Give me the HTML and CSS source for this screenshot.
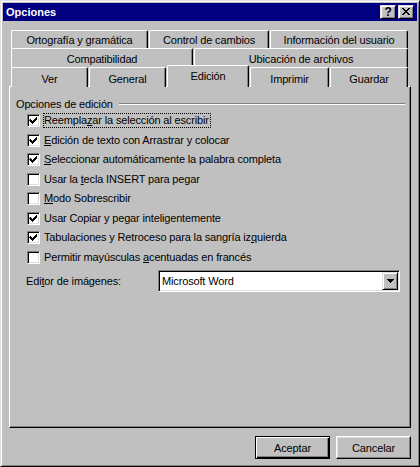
FILE: index.html
```html
<!DOCTYPE html>
<html lang="es">
<head>
    <meta charset="UTF-8">
    <title>Opciones</title>
    <link rel="stylesheet" href="styles.css">
</head>
<body>
<div class="window">
    <div class="titlebar">
        <span class="title">Opciones</span>
        <span class="caption-btn help">?</span>
        <span class="caption-btn close">
            <svg width="8" height="7" viewBox="0 0 8 7"><path d="M0 0h2v1h-2zM6 0h2v1h-2zM1 1h2v1h-2zM5 1h2v1h-2zM2 2h4v1h-4zM3 3h2v1h-2zM2 4h4v1h-4zM1 5h2v1h-2zM5 5h2v1h-2zM0 6h2v1h-2zM6 6h2v1h-2z" fill="#000"/></svg>
        </span>
    </div>

    <div class="content">
        <div class="tabs">
            <div class="tab-row row-1">
                <div class="tab">Ortografía y gramática</div>
                <div class="tab">Control de cambios</div>
                <div class="tab">Información del usuario</div>
            </div>
            <div class="tab-row row-2">
                <div class="tab">Compatibilidad</div>
                <div class="tab">Ubicación de archivos</div>
            </div>
            <div class="tab-row row-3">
                <div class="tab">Ver</div>
                <div class="tab">General</div>
                <div class="tab selected">Edición</div>
                <div class="tab">Imprimir</div>
                <div class="tab">Guardar</div>
            </div>
        </div>

        <div class="panel">
            <div class="group-title">
                <span>Opciones de edición</span>
                <span class="rule"></span>
            </div>

            <ul class="options">
                <li class="option">
                    <span class="check"><svg viewBox="0 0 11 11"><path d="M2 4h1v1h1v1h1v-1h1v-1h1v-1h1v-1h1v3h-1v1h-1v1h-1v1h-1v1h-1v-1h-1v-1h-1v-1h-1z"/></svg></span>
                    <span class="label focus">Reempla<u>z</u>ar la selección al escribir</span>
                </li>
                <li class="option">
                    <span class="check"><svg viewBox="0 0 11 11"><path d="M2 4h1v1h1v1h1v-1h1v-1h1v-1h1v-1h1v3h-1v1h-1v1h-1v1h-1v1h-1v-1h-1v-1h-1v-1h-1z"/></svg></span>
                    <span class="label"><u>E</u>dición de texto con Arrastrar y colocar</span>
                </li>
                <li class="option">
                    <span class="check"><svg viewBox="0 0 11 11"><path d="M2 4h1v1h1v1h1v-1h1v-1h1v-1h1v-1h1v3h-1v1h-1v1h-1v1h-1v1h-1v-1h-1v-1h-1v-1h-1z"/></svg></span>
                    <span class="label"><u>S</u>eleccionar automáticamente la palabra completa</span>
                </li>
                <li class="option">
                    <span class="check"></span>
                    <span class="label">Usar la <u>t</u>ecla INSERT para pegar</span>
                </li>
                <li class="option">
                    <span class="check"></span>
                    <span class="label"><u>M</u>odo Sobrescribir</span>
                </li>
                <li class="option">
                    <span class="check"><svg viewBox="0 0 11 11"><path d="M2 4h1v1h1v1h1v-1h1v-1h1v-1h1v-1h1v3h-1v1h-1v1h-1v1h-1v1h-1v-1h-1v-1h-1v-1h-1z"/></svg></span>
                    <span class="label">Usar Copiar y pe<u>g</u>ar inteligentemente</span>
                </li>
                <li class="option">
                    <span class="check"><svg viewBox="0 0 11 11"><path d="M2 4h1v1h1v1h1v-1h1v-1h1v-1h1v-1h1v3h-1v1h-1v1h-1v1h-1v1h-1v-1h-1v-1h-1v-1h-1z"/></svg></span>
                    <span class="label">Tabulaciones y Retroceso para la sangría iz<u>q</u>uierda</span>
                </li>
                <li class="option">
                    <span class="check"></span>
                    <span class="label">Permitir mayúsculas <u>a</u>centuadas en francés</span>
                </li>
            </ul>

            <div class="editor-row">
                <span class="editor-label">Edi<u>t</u>or de imágenes:</span>
                <div class="combo">
                    <span class="combo-value">Microsoft Word</span>
                    <span class="combo-btn">
                        <svg width="7" height="4" viewBox="0 0 7 4"><path d="M0 0h7v1h-1v1h-1v1h-1v1h-1v-1h-1v-1h-1v-1h-1z" fill="#000"/></svg>
                    </span>
                </div>
            </div>
        </div>

        <div class="actions">
            <button class="btn default">Aceptar</button>
            <button class="btn">Cancelar</button>
        </div>
    </div>
</div>
</body>
</html>
```

FILE: styles.css
```css
body {
    margin: 0;
    font-family: 'Liberation Sans', Arial, sans-serif;
    font-size: 11px;
    line-height: 13px;
    letter-spacing: -0.15px;
    color: #000;
}
.window {
    width: 420px;
    height: 467px;
    box-sizing: border-box;
    background: #c0c0c0;
    border: 1px solid;
    border-color: #dfdfdf #000 #000 #dfdfdf;
    box-shadow: inset 1px 1px #fff, inset -1px -1px #808080;
    padding: 2px;
}

/* barra de título */
.titlebar {
    height: 18px;
    box-sizing: border-box;
    background: #000080;
    display: flex;
    align-items: flex-start;
    padding: 2px 3px 0 3px;
}
.title {
    color: #fff;
    font-weight: bold;
    line-height: 14px;
    letter-spacing: 0;
    margin-right: auto;
}
.caption-btn {
    width: 16px;
    height: 14px;
    box-sizing: border-box;
    background: #c0c0c0;
    border: 1px solid;
    border-color: #dfdfdf #000 #000 #dfdfdf;
    box-shadow: inset 1px 1px #fff, inset -1px -1px #808080;
    display: flex;
    align-items: center;
    justify-content: center;
}
.help {
    margin-right: 2px;
    font-weight: bold;
    font-size: 12px;
    line-height: 12px;
}
.close svg {
    display: block;
    margin: 0 1px 1px 0;
}

.content {
    padding: 9px 6px 0 6px;
}

/* pestañas */
.tabs {
    padding: 0 3px 0 2px;
}
.tab-row {
    display: grid;
    column-gap: 1px;
}
.row-1 {
    grid-template-columns: 137px 120px 138px;
    height: 18px;
}
.row-2 {
    grid-template-columns: 182px 214px;
    height: 19px;
}
.row-3 {
    grid-template-columns: 77px 77px 82px 79px 78px;
    height: 19px;
}
.tab {
    box-sizing: border-box;
    background: #c0c0c0;
    border-top: 1px solid #fff;
    border-left: 1px solid #fff;
    border-right: 1px solid #000;
    border-radius: 2px 2px 0 0;
    box-shadow: inset -1px 0 #808080;
    text-align: center;
    padding-top: 3px;
    white-space: nowrap;
}
.row-2 .tab {
    padding-top: 4px;
}
.row-3 .tab {
    padding-top: 5px;
}
.row-3 .tab.selected {
    position: relative;
    z-index: 1;
    margin-top: -2px;
    height: 22px;
    padding-top: 4px;
}

/* panel */
.panel {
    height: 342px;
    box-sizing: border-box;
    border: 1px solid;
    border-color: #fff #000 #000 #fff;
    box-shadow: inset -1px -1px #808080;
    padding-top: 11px;
}
.group-title {
    display: flex;
    padding-left: 6px;
    margin-right: 5px;
}
.rule {
    flex: 1;
    height: 0;
    margin: 5px 0 0 6px;
    border-top: 1px solid #808080;
    border-bottom: 1px solid #fff;
}
.options {
    list-style: none;
    margin: 0;
    padding: 0 0 0 17px;
}
.option {
    display: flex;
    align-items: center;
    height: 19.5px;
}
.check {
    flex: none;
    width: 13px;
    height: 13px;
    box-sizing: border-box;
    background: #fff;
    border: 1px solid;
    border-color: #808080 #fff #fff #808080;
    box-shadow: inset 1px 1px #000, inset -1px -1px #dfdfdf;
    margin-right: 3px;
}
.check svg {
    display: block;
    width: 11px;
    height: 11px;
    fill: #000;
}
.label {
    border: 1px solid transparent;
    padding-right: 1px;
    white-space: nowrap;
}
.label.focus {
    border: 1px dotted #000;
}

.editor-row {
    display: flex;
    align-items: center;
    margin-top: 3px;
    padding-left: 16px;
}
.editor-label {
    width: 132px;
}
.combo {
    width: 242px;
    height: 22px;
    box-sizing: border-box;
    background: #fff;
    border: 1px solid;
    border-color: #808080 #fff #fff #808080;
    box-shadow: inset 1px 1px #000, inset -1px -1px #dfdfdf;
    padding: 1px;
    display: flex;
}
.combo-value {
    flex: 1;
    padding-left: 2px;
    line-height: 18px;
}
.combo-btn {
    width: 16px;
    height: 18px;
    box-sizing: border-box;
    background: #c0c0c0;
    border: 1px solid;
    border-color: #dfdfdf #000 #000 #dfdfdf;
    box-shadow: inset 1px 1px #fff, inset -1px -1px #808080;
    display: flex;
    align-items: center;
    justify-content: center;
}

/* botones */
.actions {
    display: flex;
    justify-content: flex-end;
    gap: 6px;
    margin-top: 8px;
}
.btn {
    width: 75px;
    height: 23px;
    box-sizing: border-box;
    padding: 0;
    font-family: inherit;
    font-size: 11px;
    letter-spacing: inherit;
    color: #000;
    background: #c0c0c0;
    border: 1px solid;
    border-color: #fff #000 #000 #fff;
    box-shadow: inset -1px -1px #808080, inset 1px 1px #dfdfdf;
}
.btn.default {
    border-color: #000;
    box-shadow: inset 1px 1px #fff, inset -1px -1px #000, inset -2px -2px #808080;
}
```
